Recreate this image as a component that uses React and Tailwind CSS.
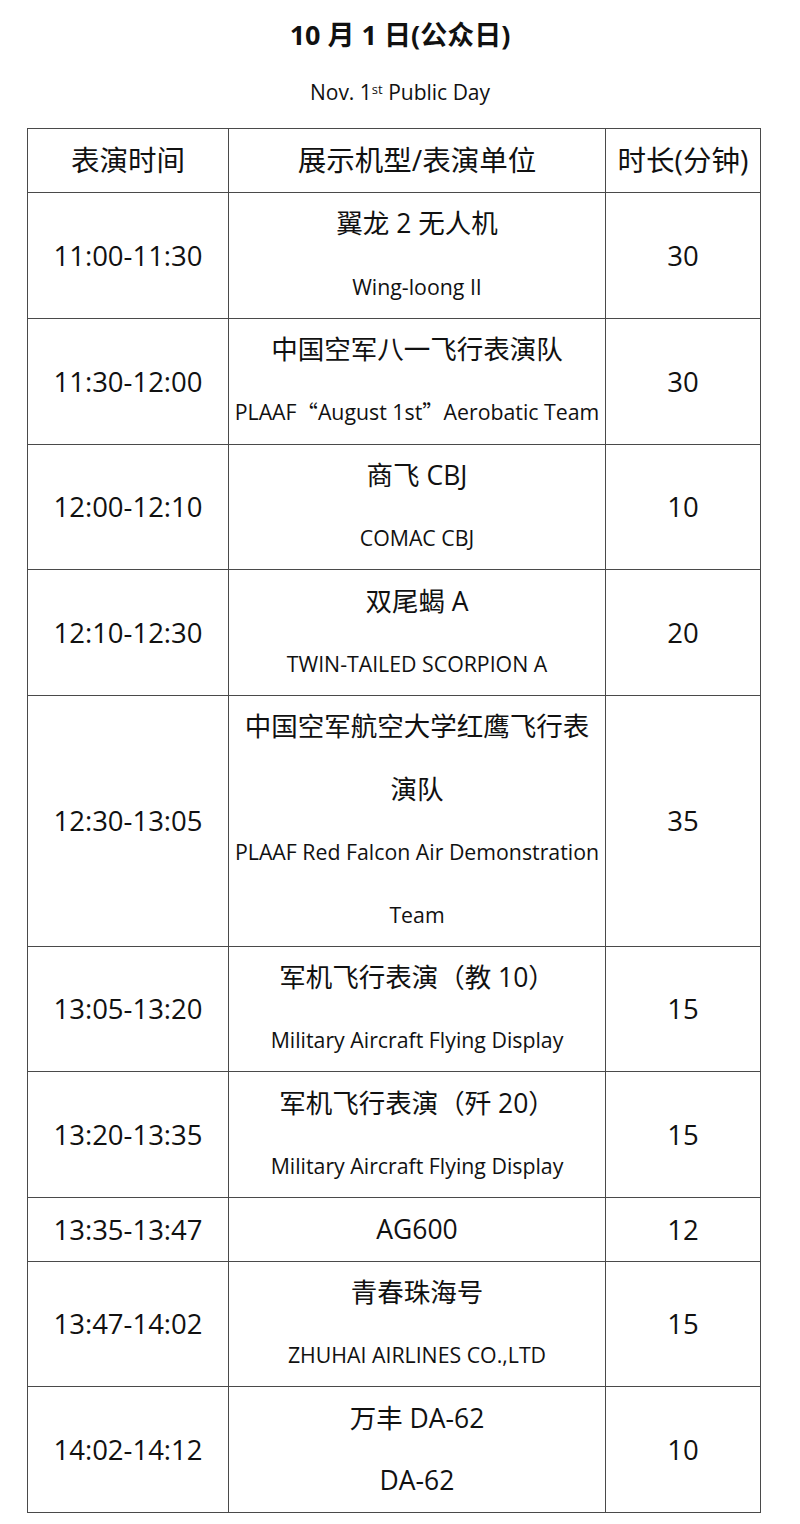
import React from 'react';

const rows = [
  { time: '11:00-11:30', lines: ['翼龙 2 无人机', 'Wing-loong II'], min: '30' },
  { time: '11:30-12:00', lines: ['中国空军八一飞行表演队', 'PLAAF“August 1st”Aerobatic Team'], min: '30' },
  { time: '12:00-12:10', lines: ['商飞 CBJ', 'COMAC CBJ'], min: '10' },
  { time: '12:10-12:30', lines: ['双尾蝎 A', 'TWIN-TAILED SCORPION A'], min: '20' },
  {
    time: '12:30-13:05',
    lines: ['中国空军航空大学红鹰飞行表', '演队', 'PLAAF Red Falcon Air Demonstration', 'Team'],
    min: '35',
  },
  { time: '13:05-13:20', lines: ['军机飞行表演（教 10）', 'Military Aircraft Flying Display'], min: '15' },
  { time: '13:20-13:35', lines: ['军机飞行表演（歼 20）', 'Military Aircraft Flying Display'], min: '15' },
  { time: '13:35-13:47', lines: ['AG600'], min: '12', big: true },
  { time: '13:47-14:02', lines: ['青春珠海号', 'ZHUHAI AIRLINES CO.,LTD'], min: '15' },
  { time: '14:02-14:12', lines: ['万丰 DA-62', 'DA-62'], min: '10', big: true },
];

// english lines are smaller than chinese ones
const isLatin = (s) => /^[\x00-\x7F“”]+$/.test(s);

// curly quotes in the source are full width (chinese punctuation)
function withQuotes(text) {
  return text.split(/([“”])/).map((part, i) =>
    part === '“' || part === '”' ? (
      <span key={i} className="inline-block w-[1em] text-center" style={{ fontFamily: '"Noto Sans CJK SC", sans-serif' }}>
        {part}
      </span>
    ) : (
      part
    )
  );
}

function Line({ text, big }) {
  const small = isLatin(text) && !big && text !== 'DA-62';
  return (
    <div
      className={`h-[62.4px] flex items-center justify-center whitespace-nowrap ${
        small ? 'text-[21.3px]' : 'text-[26.5px]'
      }`}
    >
      {withQuotes(text)}
    </div>
  );
}

export default function App() {
  return (
    <div
      className="w-[800px] h-[1524px] bg-white text-[#111]"
      style={{ fontFamily: '"Open Sans", "Noto Sans CJK SC", sans-serif' }}
    >
      {/* Title */}
      <div className="pt-[16px] text-center text-[27px] font-bold leading-[38px]">10 月 1 日(公众日)</div>
      <div className="pt-[20px] text-center text-[21px] leading-[36px]">
        Nov. 1<sup className="text-[13px]">st</sup> Public Day
      </div>

      {/* Table */}
      <table className="mt-[18px] ml-[27px] w-[733px] border-collapse table-fixed">
        <colgroup>
          <col className="w-[201px]" />
          <col className="w-[377px]" />
          <col className="w-[155px]" />
        </colgroup>
        <thead>
          <tr className="h-[64px] text-[28.5px]">
            <th className="border border-[#4a4a4a] font-normal">表演时间</th>
            <th className="border border-[#4a4a4a] font-normal">展示机型/表演单位</th>
            <th className="border border-[#4a4a4a] font-normal">时长(分钟)</th>
          </tr>
        </thead>
        <tbody>
          {rows.map((r) => (
            <tr key={r.time}>
              <td className="border border-[#4a4a4a] text-center text-[27.5px] p-0">{r.time}</td>
              <td className="border border-[#4a4a4a] p-0">
                {r.lines.map((l, i) => (
                  <Line key={i} text={l} big={r.big} />
                ))}
              </td>
              <td className="border border-[#4a4a4a] text-center text-[27.5px] p-0">{r.min}</td>
            </tr>
          ))}
        </tbody>
      </table>
    </div>
  );
}
